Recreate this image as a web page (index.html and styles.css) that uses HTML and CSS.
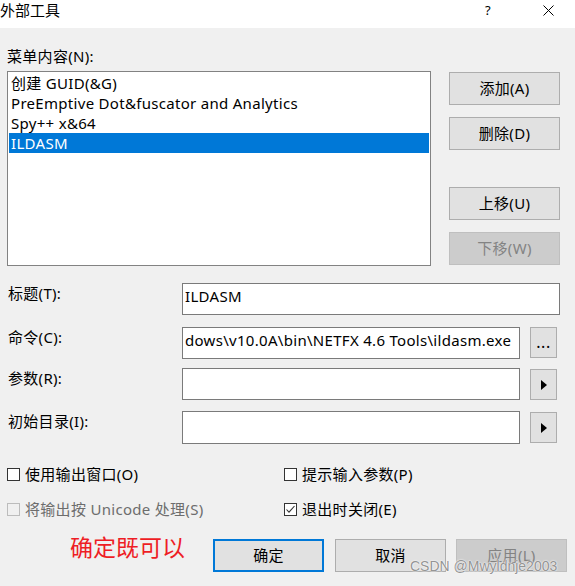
FILE: index.html
```html
<!DOCTYPE html>
<html lang="zh-CN">
<head>
<meta charset="utf-8">
<title>外部工具</title>
<link rel="stylesheet" href="styles.css">
</head>
<body>
<div class="window">
  <div class="titlebar">
    <span class="title">外部工具</span>
    <span class="help">?</span>
    <span class="close">
      <svg width="11" height="11" viewBox="0 0 11 11"><path d="M0.5 0.5 L10.5 10.5 M10.5 0.5 L0.5 10.5" stroke="#000" stroke-width="1" fill="none"/></svg>
    </span>
  </div>
  <div class="body">
    <div class="section-label">菜单内容(N):</div>
    <div class="top">
      <div class="listbox">
        <div class="item">创建 GUID(&amp;G)</div>
        <div class="item">PreEmptive Dot&amp;fuscator and Analytics</div>
        <div class="item">Spy++ x&amp;64</div>
        <div class="item selected">ILDASM</div>
      </div>
      <div class="side">
        <div class="btn">添加(A)</div>
        <div class="btn">删除(D)</div>
        <div class="btn btn-far">上移(U)</div>
        <div class="btn disabled">下移(W)</div>
      </div>
    </div>

    <div class="field row-title">
      <div class="label">标题(T):</div>
      <div class="input input-wide">ILDASM</div>
    </div>
    <div class="field row-cmd">
      <div class="label">命令(C):</div>
      <div class="input">dows\v10.0A\bin\NETFX 4.6 Tools\ildasm.exe</div>
      <div class="mini-btn dots">...</div>
    </div>
    <div class="field row-args">
      <div class="label">参数(R):</div>
      <div class="input"></div>
      <div class="mini-btn"><span class="tri"></span></div>
    </div>
    <div class="field row-dir">
      <div class="label">初始目录(I):</div>
      <div class="input input-tall"></div>
      <div class="mini-btn"><span class="tri"></span></div>
    </div>

    <div class="checks">
      <div class="check"><span class="box"></span>使用输出窗口(O)</div>
      <div class="check"><span class="box"></span>提示输入参数(P)</div>
      <div class="check check-disabled"><span class="box"></span>将输出按 Unicode 处理(S)</div>
      <div class="check"><span class="box"><svg width="11" height="11" viewBox="0 0 11 11"><path d="M1.5 5.5 L4 8.2 L9.5 2" stroke="#333" stroke-width="1.1" fill="none"/></svg></span>退出时关闭(E)</div>
    </div>

    <div class="footer">
      <div class="note">确定既可以</div>
      <div class="btn btn-default">确定</div>
      <div class="btn">取消</div>
      <div class="btn disabled btn-apply">应用(L)</div>
    </div>
  </div>
  <div class="watermark">CSDN @Mwyldnje2003</div>
</div>
</body>
</html>
```

FILE: styles.css
```css
* { box-sizing: border-box; }

html, body {
  margin: 0;
  padding: 0;
  background: #f0f0f0;
}

body {
  font-family: "Noto Sans", "Noto Sans CJK SC", sans-serif;
  font-size: 15px;
  line-height: 20px;
  letter-spacing: 0.3px;
  color: #000;
}

.window {
  position: relative;
  width: 575px;
  height: 586px;
  overflow: hidden;
  background: #f0f0f0;
}

.titlebar {
  height: 28px;
  background: #fff;
  display: flex;
  align-items: flex-start;
}

.title {
  padding-top: 0;
  font-size: 15px;
  letter-spacing: 0;
}

.help {
  margin-left: auto;
  margin-top: 3px;
  font-size: 13px;
  line-height: 14px;
  width: 10px;
}

.close {
  margin-left: 48px;
  margin-right: 21px;
  margin-top: 5px;
  display: flex;
}

.body {
  padding-left: 7px;
}

.section-label {
  padding-top: 18px;
  height: 43px;
}

.top {
  display: flex;
  align-items: flex-start;
  gap: 18px;
}

.listbox {
  width: 424px;
  height: 195px;
  background: #fff;
  border: 1px solid #828282;
  padding: 1px 1px;
}

.item {
  height: 20px;
  line-height: 20px;
  padding-left: 2px;
  white-space: nowrap;
}

.item.selected {
  background: #0078d7;
  color: #fff;
}

.side {
  display: flex;
  flex-direction: column;
  gap: 12px;
  padding-top: 1px;
}

.btn {
  width: 111px;
  height: 33px;
  background: #e1e1e1;
  border: 1px solid #adadad;
  display: flex;
  align-items: center;
  justify-content: center;
  font-size: 15px;
  line-height: 20px;
  padding-bottom: 2px;
}

.btn-far {
  margin-top: 25px;
}

.btn.disabled {
  background: #cccccc;
  border-color: #bfbfbf;
  color: #838383;
}

.field {
  display: flex;
  align-items: flex-start;
}

.row-title { margin-top: 17px; }
.row-cmd { margin-top: 12px; }
.row-args { margin-top: 9px; }
.row-dir { margin-top: 11px; }

.label {
  width: 175px;
  padding-top: 0;
  padding-left: 1px;
}

.input {
  width: 338px;
  height: 32px;
  background: #fff;
  border: 1px solid #7a7a7a;
  padding: 2px 0 0 2px;
  white-space: nowrap;
  overflow: hidden;
}

.input-wide { width: 378px; }
.input-tall { height: 33px; }

.mini-btn {
  width: 27px;
  height: 31px;
  margin-left: 10px;
  margin-top: 1px;
  background: #e1e1e1;
  border: 1px solid #adadad;
  display: flex;
  align-items: center;
  justify-content: center;
}

.row-cmd .mini-btn { margin-top: 0; }

.dots {
  font-size: 16px;
  line-height: 16px;
  align-items: flex-end;
  padding-bottom: 7px;
  letter-spacing: 0.5px;
}

.tri {
  width: 0;
  height: 0;
  border-top: 5px solid transparent;
  border-bottom: 5px solid transparent;
  border-left: 6px solid #000;
  margin-left: 1px;
}

.checks {
  display: grid;
  grid-template-columns: 277px 1fr;
  row-gap: 15px;
  margin-top: 20px;
}

.check {
  display: flex;
  align-items: center;
  height: 20px;
  white-space: nowrap;
}

.box {
  width: 13px;
  height: 13px;
  border: 1px solid #333;
  background: #fff;
  margin-right: 5px;
  display: flex;
  align-items: center;
  justify-content: center;
  flex: none;
}

.check-disabled {
  color: #6d6d6d;
}

.check-disabled .box {
  border-color: #bcbcbc;
  background: #f0f0f0;
}

.footer {
  display: flex;
  align-items: flex-start;
  margin-top: 20px;
  padding-left: 63px;
}

.note {
  width: 143px;
  font-size: 23px;
  line-height: 30px;
  letter-spacing: 0;
  color: #ee1d25;
  margin-top: -7px;
}

.footer .btn { margin-right: 11px; }
.footer .btn-default { border: 2px solid #0078d7; }
.footer .btn-apply { margin-right: 0; margin-left: -1px; }

.watermark {
  position: absolute;
  left: 410px;
  top: 557px;
  font-family: "Liberation Sans", sans-serif;
  font-size: 14px;
  line-height: 18px;
  letter-spacing: 0;
  color: rgba(120, 120, 120, 0.8);
  text-shadow: 0 0 2px #fff, 0 0 1px #fff;
  white-space: nowrap;
}
```
